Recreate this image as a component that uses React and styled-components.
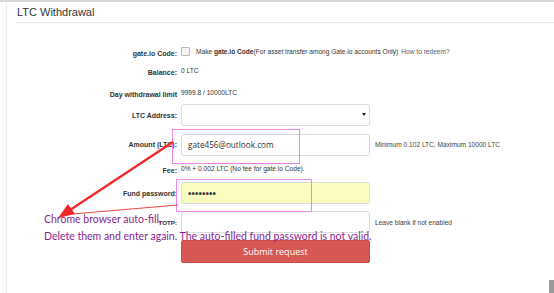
import React from 'react';
import styled, { createGlobalStyle } from 'styled-components';

const GlobalStyle = createGlobalStyle`
  html, body {
    margin: 0;
    padding: 0;
    background: #fff;
    font-family: "Liberation Sans", Arial, sans-serif;
    overflow: hidden;
  }
`;

const Page = styled.div`
  position: relative;
  width: 554px;
  height: 293px;
  border-top: 2px solid #d9d9d9;
  box-sizing: border-box;
  overflow: hidden;
`;

const Panel = styled.div`
  margin-left: 6px;
  height: 100%;
  border-left: 1px solid #ececec;
  padding-left: 10px;
`;

const Title = styled.h2`
  margin: 0;
  padding-top: 4px;
  height: 16px;
  font-size: 11px;
  font-weight: normal;
  color: #333;
  border-bottom: 1px solid #e2e9ee;
`;

const Form = styled.div`
  display: flex;
  flex-direction: column;
  padding-top: 20px;
`;

const Row = styled.div`
  display: grid;
  grid-template-columns: 160px 189px auto;
  column-gap: 4px;
  align-items: center;
  height: ${(p) => p.$h}px;
  margin-top: ${(p) => p.$mt || 0}px;
`;

const Label = styled.div`
  text-align: right;
  font-size: ${(p) => p.$size || 7}px;
  font-weight: bold;
  color: #333;
  white-space: nowrap;
  padding-top: ${(p) => p.$down || 0}px;
`;

const Value = styled.div`
  grid-column: ${(p) => (p.$wide ? '2 / 4' : 'auto')};
  font-size: 6.6px;
  color: #333;
  white-space: nowrap;
  padding-bottom: ${(p) => p.$up || 0}px;
  display: flex;
  align-items: center;
`;

const Check = styled.span`
  display: inline-block;
  width: 7px;
  height: 7px;
  border: 1px solid #bbb;
  border-radius: 1px;
  background: #f4f4f4;
  margin-right: 6px;
`;

const Link = styled.span`
  color: #555e6a;
  margin-left: 3px;
`;

const Field = styled.div`
  position: relative;
  height: 22px;
  box-sizing: border-box;
  border: 1px solid #dcdcdc;
  border-radius: 3px;
  background: ${(p) => (p.$fill ? '#fafcc0' : '#fff')};
  display: flex;
  align-items: center;
  padding-left: 6px;
  font-family: "Open Sans", "Noto Sans", sans-serif;
  font-size: 8.2px;
  color: #333;
`;

const Caret = styled.span`
  position: absolute;
  right: 3px;
  top: 8px;
  width: 0;
  height: 0;
  border-left: 2px solid transparent;
  border-right: 2px solid transparent;
  border-top: 3px solid #222;
`;

const Dots = styled.span`
  font-size: 9px;
  letter-spacing: 0.1px;
  font-weight: bold;
`;

const Hint = styled.div`
  font-size: 6.6px;
  color: #444;
  white-space: nowrap;
  padding-left: 1px;
`;

const Submit = styled.button`
  grid-column: 2;
  height: 23px;
  border: 1px solid #cf4b47;
  border-radius: 2px;
  background: #d75753;
  color: #fff;
  font-family: "Open Sans", "Noto Sans", sans-serif;
  font-size: 9px;
  padding: 0;
`;

const Mark = styled.div`
  position: absolute;
  border: 1px solid #ef86ef;
  left: ${(p) => p.$x}px;
  top: ${(p) => p.$y}px;
  width: ${(p) => p.$w}px;
  height: ${(p) => p.$hh}px;
  pointer-events: none;
`;

const Note = styled.div`
  position: absolute;
  left: 44px;
  top: 209px;
  font-family: "Lato", "Open Sans", sans-serif;
  font-size: 10.5px;
  line-height: 17px;
  color: #8a1e8e;
  white-space: nowrap;
`;

const Arrows = styled.svg`
  position: absolute;
  left: 0;
  top: -2px;
  pointer-events: none;
`;

const Thumb = styled.div`
  position: absolute;
  right: 0;
  bottom: 0;
  width: 5px;
  height: 13px;
  background: #9a9a9a;
`;

export default function App() {
  return (
    <>
      <GlobalStyle />
      <Page>
        <Panel>
          <Title>LTC Withdrawal</Title>
          <Form>
            <Row $h={18}>
              <Label $down={2}>gate.io Code:</Label>
              <Value $wide $up={1}>
                <Check />
                Make&nbsp;<b>gate.io Code</b>(For asset transfer among Gate.io accounts Only)
                <Link>How to redeem?</Link>
              </Value>
            </Row>
            <Row $h={21}>
              <Label $down={2}>Balance:</Label>
              <Value $up={3}>0 LTC</Value>
            </Row>
            <Row $h={21}>
              <Label $down={4}>Day withdrawal limit</Label>
              <Value>9999.8 / 10000LTC</Value>
            </Row>
            <Row $h={22} $mt={1}>
              <Label>LTC Address:</Label>
              <Field>
                <Caret />
              </Field>
            </Row>
            <Row $h={23} $mt={7}>
              <Label>Amount (LTC):</Label>
              <Field>gate456@outlook.com</Field>
              <Hint>Minimum 0.102 LTC, Maximum 10000 LTC</Hint>
            </Row>
            <Row $h={20} $mt={4}>
              <Label>Fee:</Label>
              <Value $up={3}>0% + 0.002 LTC (No fee for gate.io Code).</Value>
            </Row>
            <Row $h={22} $mt={2}>
              <Label>Fund password:</Label>
              <Field $fill>
                <Dots>••••••••</Dots>
              </Field>
            </Row>
            <Row $h={22} $mt={7}>
              <Label $size={6.2} $down={1}>TOTP:</Label>
              <Field />
              <Hint>Leave blank if not enabled</Hint>
            </Row>
            <Row $h={23} $mt={7}>
              <span />
              <Submit>Submit request</Submit>
            </Row>
          </Form>
        </Panel>

        <Mark $x={172} $y={127} $w={126} $hh={33} />
        <Mark $x={176} $y={177} $w={134} $hh={31} />

        <Arrows width="554" height="293" viewBox="0 0 554 293">
          <line x1="173" y1="142" x2="70" y2="210" stroke="#f02a2a" strokeWidth="2.4" />
          <line x1="178" y1="205" x2="72" y2="214" stroke="#f04848" strokeWidth="1.2" />
          <polygon points="58,218 68,204 75,214" fill="#f02a2a" />
        </Arrows>

        <Note>
          Chrome browser auto-fill,
          <br />
          Delete them and enter again. The auto-filled fund password is not valid.
        </Note>

        <Thumb />
      </Page>
    </>
  );
}
